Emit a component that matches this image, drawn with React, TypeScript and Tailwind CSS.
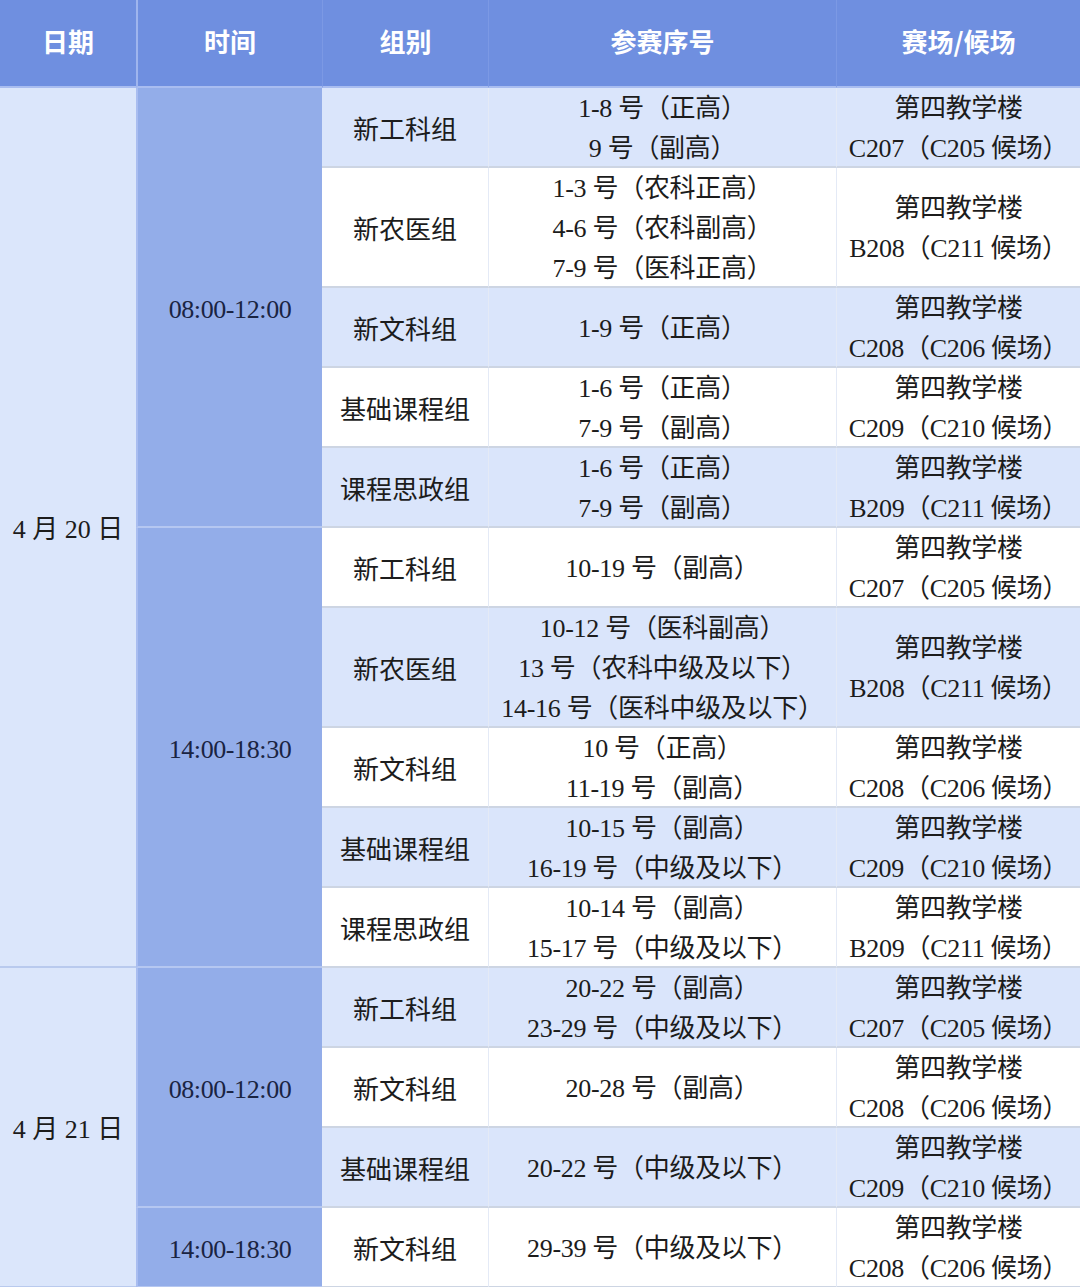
const font = { fontFamily: '"Liberation Serif", "Noto Sans CJK SC", serif' };

type Row = { group: string; nums: string[]; venue: string[]; tall?: boolean };

const rows: Row[] = [
  { group: "新工科组", nums: ["1-8 号（正高）", "9 号（副高）"], venue: ["第四教学楼", "C207（C205 候场）"] },
  { group: "新农医组", nums: ["1-3 号（农科正高）", "4-6 号（农科副高）", "7-9 号（医科正高）"], venue: ["第四教学楼", "B208（C211 候场）"], tall: true },
  { group: "新文科组", nums: ["1-9 号（正高）"], venue: ["第四教学楼", "C208（C206 候场）"] },
  { group: "基础课程组", nums: ["1-6 号（正高）", "7-9 号（副高）"], venue: ["第四教学楼", "C209（C210 候场）"] },
  { group: "课程思政组", nums: ["1-6 号（正高）", "7-9 号（副高）"], venue: ["第四教学楼", "B209（C211 候场）"] },
  { group: "新工科组", nums: ["10-19 号（副高）"], venue: ["第四教学楼", "C207（C205 候场）"] },
  { group: "新农医组", nums: ["10-12 号（医科副高）", "13 号（农科中级及以下）", "14-16 号（医科中级及以下）"], venue: ["第四教学楼", "B208（C211 候场）"], tall: true },
  { group: "新文科组", nums: ["10 号（正高）", "11-19 号（副高）"], venue: ["第四教学楼", "C208（C206 候场）"] },
  { group: "基础课程组", nums: ["10-15 号（副高）", "16-19 号（中级及以下）"], venue: ["第四教学楼", "C209（C210 候场）"] },
  { group: "课程思政组", nums: ["10-14 号（副高）", "15-17 号（中级及以下）"], venue: ["第四教学楼", "B209（C211 候场）"] },
  { group: "新工科组", nums: ["20-22 号（副高）", "23-29 号（中级及以下）"], venue: ["第四教学楼", "C207（C205 候场）"] },
  { group: "新文科组", nums: ["20-28 号（副高）"], venue: ["第四教学楼", "C208（C206 候场）"] },
  { group: "基础课程组", nums: ["20-22 号（中级及以下）"], venue: ["第四教学楼", "C209（C210 候场）"] },
  { group: "新文科组", nums: ["29-39 号（中级及以下）"], venue: ["第四教学楼", "C208（C206 候场）"] },
];

// date / time cells that sit before a given row index
const spans: Record<number, { date?: [string, string]; time?: [string, string] }> = {
  0: { date: ["4 月 20 日", "row-span-10"], time: ["08:00-12:00", "row-span-5"] },
  5: { time: ["14:00-18:30", "row-span-5"] },
  10: { date: ["4 月 21 日", "row-span-4"], time: ["08:00-12:00", "row-span-3"] },
  13: { time: ["14:00-18:30", "row-span-1"] },
};

function Lines({ items }: { items: string[] }) {
  return (
    <div className="flex flex-col items-center pt-[4px] tracking-[-0.3px]">
      {items.map((t, i) => (
        <div key={i} className="leading-[40px] whitespace-nowrap">{t}</div>
      ))}
    </div>
  );
}

export default function App() {
  return (
    <div className="w-[1080px] h-[1287px] overflow-hidden bg-white text-[26px] text-[#1c1c1c]" style={font}>
      <div className="grid grid-cols-[136px_186px_166px_348px_244px] grid-rows-[88px_80px_120px_80px_80px_80px_80px_120px_80px_80px_80px_80px_80px_80px_80px]">
        {["日期", "时间", "组别", "参赛序号", "赛场/候场"].map((h, i) => (
          <div
            key={h}
            className={
              "flex items-center justify-center pb-[6px] bg-[#6f8fe0] text-white font-bold border-b-2 border-[#a9bdf0] " +
              (i === 0 ? "" : i === 1 ? "border-l-2 border-l-[#9fb5ee]" : "border-l border-l-[#7c99e4]")
            }
            style={{ fontFamily: '"Noto Sans CJK SC", sans-serif' }}
          >
            {h}
          </div>
        ))}
        {rows.map((r, i) => {
          const s = spans[i] || {};
          const bg = i % 2 === 0 ? "bg-[#dae5fb]" : "bg-white";
          return [
            s.date && (
              <div key={"d" + i} className={"flex items-center justify-center pt-[4px] bg-[#dbe6fb] border-b-2 border-[#b9caee] " + s.date[1]}>
                {s.date[0]}
              </div>
            ),
            s.time && (
              <div key={"t" + i} className={"flex items-center justify-center pt-[4px] tracking-[-0.4px] bg-[#93ade9] text-[#1a2442] border-l-2 border-l-[#a9bdf0] border-b-2 border-[#b5c7f1] " + s.time[1]}>
                {s.time[0]}
              </div>
            ),
            <div key={"g" + i} className={"flex items-center justify-center border-b-2 border-[#cdd5e3] " + bg} style={{ fontFamily: '"Noto Sans CJK SC", sans-serif' }}>
              {r.group}
            </div>,
            <div key={"n" + i} className={"flex items-center justify-center border-b-2 border-[#cdd5e3] border-l border-l-[#e4eaf6] " + bg}>
              <Lines items={r.nums} />
            </div>,
            <div key={"v" + i} className={"flex items-center justify-center border-b-2 border-[#cdd5e3] border-l border-l-[#e4eaf6] " + bg}>
              <Lines items={r.venue} />
            </div>,
          ];
        })}
      </div>
    </div>
  );
}
